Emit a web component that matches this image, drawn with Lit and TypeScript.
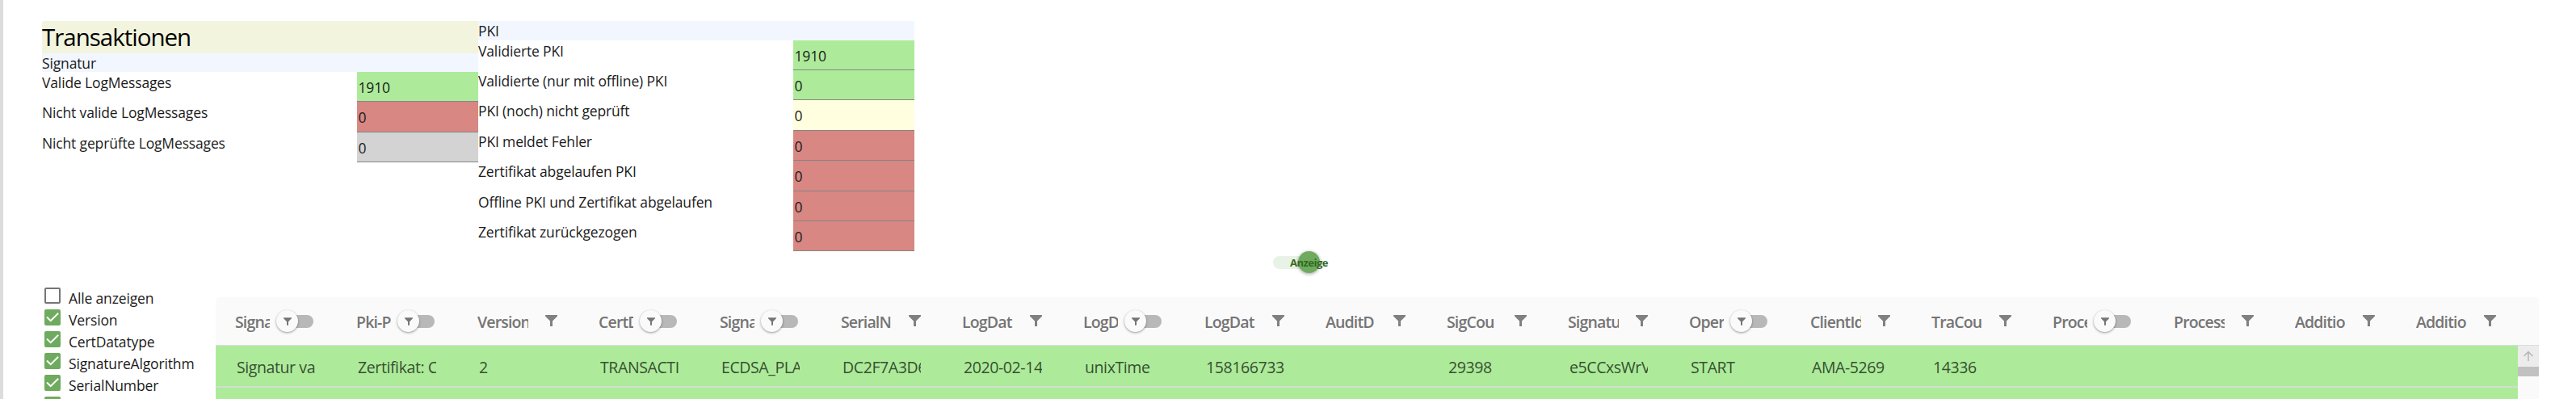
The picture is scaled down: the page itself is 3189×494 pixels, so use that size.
import { css, html, LitElement, nothing, svg } from 'lit';
import { customElement, property } from 'lit/decorators.js';
import { classMap } from 'lit/directives/class-map.js';

type Tone = 'valid' | 'error' | 'pending' | 'neutral';

interface Stat {
  label: string;
  value: number;
  tone: Tone;
}

interface Column {
  title: string;
  value: string;
  toggle?: boolean;
}

const SIGNATURE_STATS: Stat[] = [
  { label: 'Valide LogMessages', value: 1910, tone: 'valid' },
  { label: 'Nicht valide LogMessages', value: 0, tone: 'error' },
  { label: 'Nicht geprüfte LogMessages', value: 0, tone: 'neutral' },
];

const PKI_STATS: Stat[] = [
  { label: 'Validierte PKI', value: 1910, tone: 'valid' },
  { label: 'Validierte (nur mit offline) PKI', value: 0, tone: 'valid' },
  { label: 'PKI (noch) nicht geprüft', value: 0, tone: 'pending' },
  { label: 'PKI meldet Fehler', value: 0, tone: 'error' },
  { label: 'Zertifikat abgelaufen PKI', value: 0, tone: 'error' },
  { label: 'Offline PKI und Zertifikat abgelaufen', value: 0, tone: 'error' },
  { label: 'Zertifikat zurückgezogen', value: 0, tone: 'error' },
];

const FIELDS = [
  { label: 'Alle anzeigen', checked: false },
  { label: 'Version', checked: true },
  { label: 'CertDatatype', checked: true },
  { label: 'SignatureAlgorithm', checked: true },
  { label: 'SerialNumber', checked: true },
  { label: '', checked: true },
];

const COLUMNS: Column[] = [
  { title: 'Signa', value: 'Signatur va', toggle: true },
  { title: 'Pki-P', value: 'Zertifikat: C', toggle: true },
  { title: 'Version', value: '2' },
  { title: 'CertD', value: 'TRANSACTI', toggle: true },
  { title: 'Signa', value: 'ECDSA_PLA', toggle: true },
  { title: 'SerialN', value: 'DC2F7A3D6' },
  { title: 'LogDat', value: '2020-02-14' },
  { title: 'LogD', value: 'unixTime', toggle: true },
  { title: 'LogDat', value: '158166733' },
  { title: 'AuditD', value: '' },
  { title: 'SigCou', value: '29398' },
  { title: 'Signatu', value: 'e5CCxsWrV' },
  { title: 'Oper', value: 'START', toggle: true },
  { title: 'ClientId', value: 'AMA-5269' },
  { title: 'TraCou', value: '14336' },
  { title: 'Proce', value: '', toggle: true },
  { title: 'Process', value: '' },
  { title: 'Additio', value: '' },
  { title: 'Additio', value: '' },
];

const funnel = svg`<path d="M0 0h15v1.5L9 7.5V14H6V7.5L0 1.5z" fill="currentColor" />`;

@customElement('stat-list')
export class StatList extends LitElement {
  @property({ type: String }) heading: string = '';
  @property({ attribute: false }) stats: Stat[] = [];

  protected render() {
    return html`
      <div class="heading">${this.heading}</div>
      ${this.stats.map(
        (s) => html`<div class="row">
          <span class="label">${s.label}</span>
          <span class="value ${s.tone}">${s.value}</span>
        </div>`
      )}
    `;
  }

  static styles = css`
    :host {
      display: block;
    }

    .heading {
      height: 23.5px;
      line-height: 25px;
      background-color: #f2f7ff;
    }

    .row {
      display: flex;
      justify-content: space-between;
      height: 37.43px;
    }

    .label {
      line-height: 26px;
      white-space: nowrap;
    }

    .value {
      box-sizing: border-box;
      width: 150px;
      padding-left: 1.5px;
      line-height: 38px;
      border-bottom: 1.5px solid #858585;
    }

    .valid {
      background-color: #adeb9b;
    }

    .error {
      background-color: #d88783;
    }

    .pending {
      background-color: #ffffe0;
    }

    .neutral {
      background-color: #d3d3d3;
    }
  `;
}

@customElement('filter-header')
export class FilterHeader extends LitElement {
  @property({ type: String }) title: string = '';
  @property({ type: Boolean }) toggle: boolean = false;

  protected render() {
    return html`
      <span class=${classMap({ title: true, short: this.toggle })}>${this.title}</span>
      ${this.toggle
        ? html`<span class="switch">
            <span class="thumb"><svg width="10" height="10" viewBox="0 0 15 14">${funnel}</svg></span>
          </span>`
        : html`<svg class="icon" width="15" height="14" viewBox="0 0 15 14">${funnel}</svg>`}
    `;
  }

  static styles = css`
    :host {
      display: flex;
      align-items: center;
      box-sizing: border-box;
      width: 150px;
      height: 59px;
      padding-left: 24px;
      color: #757575;
    }

    .title {
      width: 63px;
      line-height: 30px;
      padding-top: 2px;
      overflow: hidden;
      white-space: nowrap;
      font-size: 19.5px;
      font-weight: 600;
      letter-spacing: -0.85px;
    }

    .short {
      width: 43px;
    }

    .icon {
      margin-left: 21px;
      margin-bottom: 1px;
      color: #808080;
    }

    .switch {
      display: flex;
      align-items: center;
      width: 39px;
      height: 16px;
      margin-left: 15px;
      border-radius: 8px;
      background-color: #b8b8b8;
    }

    .thumb {
      display: flex;
      align-items: center;
      justify-content: center;
      flex: none;
      width: 27px;
      height: 27px;
      margin-left: -7px;
      border-radius: 50%;
      background-color: #fafafa;
      box-shadow: 0 1px 3px rgba(0, 0, 0, 0.4);
    }
  `;
}

@customElement('app-root')
export class AppRoot extends LitElement {
  protected render() {
    return html`
      <section class="summary">
        <div class="block">
          <h1>Transaktionen</h1>
          <stat-list heading="Signatur" .stats=${SIGNATURE_STATS}></stat-list>
        </div>
        <stat-list class="block" heading="PKI" .stats=${PKI_STATS}></stat-list>
      </section>
      <div class="display"><span class="track"><span class="knob">Anzeige</span></span></div>
      <section class="content">
        <div class="fields">${FIELDS.map((f) => this.renderField(f.label, f.checked))}</div>
        <div class="table">
          <div class="head">
            ${COLUMNS.map((c) => html`<filter-header .title=${c.title} ?toggle=${c.toggle}></filter-header>`)}
          </div>
          <div class="body">
            <div class="rows">
              <div class="row">${COLUMNS.map((c) => html`<span class="cell">${c.value}</span>`)}</div>
              <div class="row"></div>
            </div>
            <div class="scrollbar">
              <span class="up">
                <svg width="14" height="14" viewBox="0 0 14 14" fill="none" stroke="#b5b5b5" stroke-width="1.5">
                  <path d="M7 13V1.5M1.5 7L7 1.5L12.5 7" />
                </svg>
              </span>
              <span class="handle"></span>
            </div>
          </div>
        </div>
      </section>
    `;
  }

  private renderField(label: string, checked: boolean) {
    return html`<div class="field">
      <span class=${classMap({ box: true, checked })}>
        ${checked
          ? html`<svg width="20" height="20" viewBox="0 0 20 20" fill="none" stroke="#fff" stroke-width="2">
              <path d="M3 9.5L7.7 14.2L17.2 4.7" />
            </svg>`
          : nothing}
      </span>
      <span class="name">${label}</span>
    </div>`;
  }

  static styles = css`
    :host {
      display: block;
      box-sizing: border-box;
      height: 494px;
      overflow: hidden;
      border-left: 4px solid #dcdcdc;
      padding: 26px 46px 0 48px;
      background-color: #fff;
      color: #1c1c1c;
      font-family: 'Open Sans', 'Noto Sans', sans-serif;
      font-size: 17.5px;
      letter-spacing: -0.15px;
    }

    .summary {
      display: flex;
      height: 285px;
    }

    .block {
      width: 540px;
    }

    h1 {
      margin: 0;
      height: 39.5px;
      line-height: 40px;
      border-radius: 3px 0 0 0;
      background-color: #f3f4de;
      color: #000;
      font-size: 29.5px;
      font-weight: 400;
      letter-spacing: -1px;
    }

    .display {
      display: flex;
      height: 57px;
      padding: 5.5px 0 0 1524px;
      box-sizing: border-box;
    }

    .track {
      display: flex;
      align-items: center;
      justify-content: flex-end;
      width: 50px;
      height: 16px;
      border-radius: 8px;
      background-color: #e9f2e6;
    }

    .knob {
      display: flex;
      align-items: center;
      justify-content: center;
      width: 27px;
      height: 27px;
      margin-right: -8px;
      border-radius: 50%;
      background-color: #6eab5e;
      box-shadow: 0 1px 4px rgba(0, 0, 0, 0.4);
      color: #33691e;
      font-size: 13px;
      font-weight: 700;
      letter-spacing: -0.5px;
      line-height: 24px;
    }

    .content {
      display: flex;
    }

    .fields {
      width: 215px;
      flex: none;
      box-sizing: border-box;
      padding-left: 3px;
      margin-top: -12px;
    }

    .field {
      display: flex;
      height: 27px;
    }

    .box {
      box-sizing: border-box;
      width: 20px;
      height: 20px;
      margin-right: 10px;
      border: 2px solid #757575;
      border-radius: 2px;
    }

    .box.checked {
      border: none;
      background-color: #6eab5e;
    }

    .box svg {
      display: block;
    }

    .name {
      line-height: 26px;
    }

    .table {
      width: 2876px;
    }

    .head {
      display: flex;
      height: 59px;
      border-bottom: 1.5px solid #dcdcdc;
      border-radius: 5px 5px 0 0;
      background-color: #fafafa;
    }

    .body {
      display: flex;
    }

    .rows {
      width: 2850px;
    }

    .row {
      display: flex;
      height: 50px;
      border-bottom: 2px solid #d3dccf;
      background-color: #adeb9b;
    }

    .cell {
      width: 97px;
      padding: 0 27px 0 26px;
      flex: none;
      line-height: 53px;
      overflow: clip;
      overflow-clip-margin: content-box;
      white-space: nowrap;
      color: #37502f;
      font-size: 19.5px;
      letter-spacing: -0.4px;
    }

    .scrollbar {
      display: flex;
      flex-direction: column;
      width: 26px;
      background-color: #fafafa;
    }

    .up {
      display: flex;
      align-items: center;
      justify-content: center;
      height: 26px;
      background-color: #ececec;
    }

    .handle {
      height: 12px;
      background-color: #c1c1c1;
    }
  `;
}
